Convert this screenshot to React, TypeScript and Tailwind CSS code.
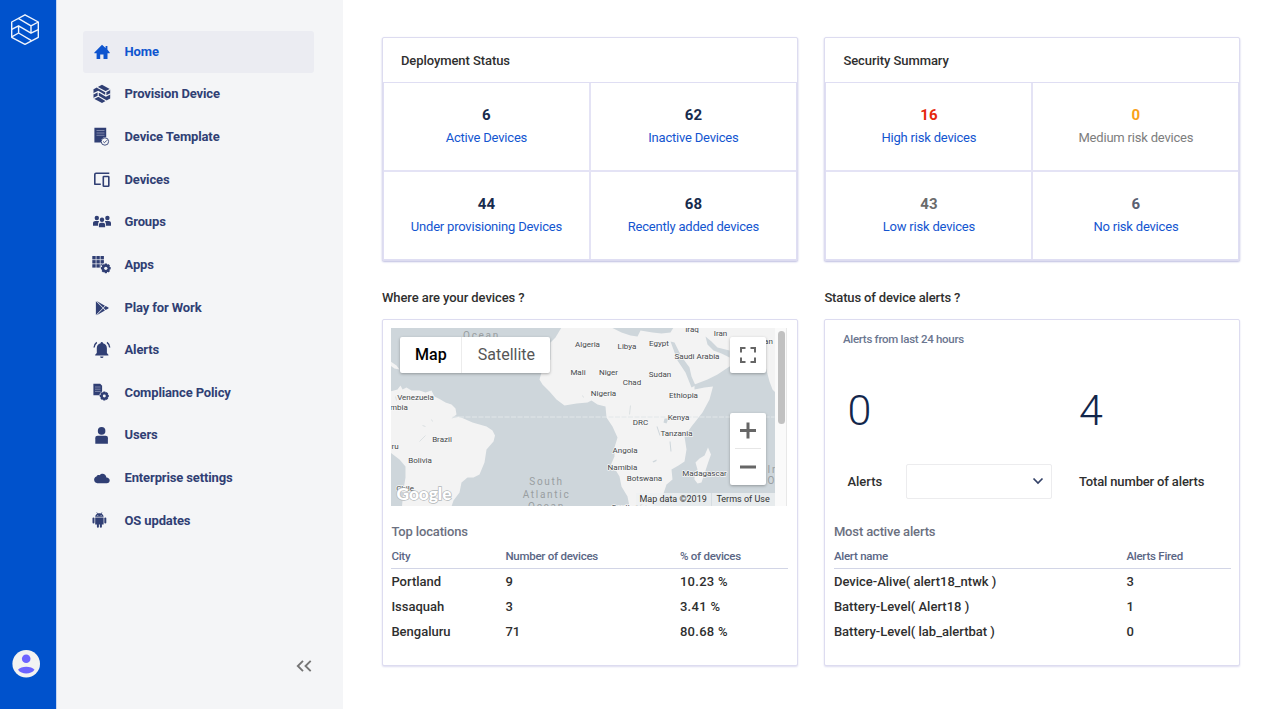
import type { ReactNode } from "react";

function Icon({ children }: { children: ReactNode }) {
  return (
    <svg width="20" height="20" viewBox="0 0 20 20" fill="currentColor" className="shrink-0">
      {children}
    </svg>
  );
}

function Gear({ x, y, r, hole }: { x: number; y: number; r: number; hole: string }) {
  return (
    <g transform={`translate(${x} ${y})`}>
      {[0, 45, 90, 135].map((a) => (
        <rect key={a} x={-1.2} y={-r} width={2.4} height={r * 2} rx={0.4} transform={`rotate(${a})`} />
      ))}
      <circle r={r * 0.82} />
      <circle r={r * 0.33} fill={hole} />
    </g>
  );
}

const bg = "#f4f5f7";

const items: { label: string; icon: ReactNode }[] = [
  {
    label: "Home",
    icon: <path d="M10 2.8 13.6 6V4h1.8v3.6l2.3 2.8c.3.4 0 .9-.4.9h-1.8V17h-4v-4.500H8.200V17H4.600v-5.700H2.800c-.5 0-.7-.5-.4-.9Z" />,
  },
  {
    label: "Provision Device",
    icon: (
      <>
        <path d="M10 .8 18.200 5.200v9.400L10 19l-8.500-4.400V5.200Z" />
        <path d="M5.200 3.300 13.600 7.700 18.400 5.200M1.300 9.900 6.200 7.400l7.700 4.600 4.700-2.300M1.300 14.600l4.900-2.500 8.300 4.900M6.200 7.400v4.700M13.800 7.600V12" fill="none" stroke={bg} strokeWidth="1.200" />
      </>
    ),
  },
  {
    label: "Device Template",
    icon: (
      <>
        <path d="M2.400.8h11.800v9.400a4.600 4.600 0 0 0-5.200 5.400H2.400Z" />
        <path d="M4.500 3.500h8M4.500 6h8M4.500 8.300h8" stroke="#9298b8" strokeWidth="0.8" />
        <circle cx="12.900" cy="14.500" r="3.700" fill={bg} stroke="currentColor" strokeWidth="0.9" />
        <path d="m11.200 14.500 1.300 1.200 2.400-2.400" fill="none" stroke="currentColor" strokeWidth="0.9" />
      </>
    ),
  },
  {
    label: "Devices",
    icon: (
      <g fill="none" stroke="currentColor" strokeWidth="1.600" strokeLinejoin="round">
        <path d="M17.300 3.200H4a1.200 1.200 0 0 0-1.200 1.200v9.900h6" />
        <rect x="11.300" y="6.500" width="5.500" height="9.800" rx="0.6" />
      </g>
    ),
  },
  {
    label: "Groups",
    icon: (
      <>
        <circle cx="4.800" cy="6" r="2.200" />
        <circle cx="15.400" cy="6" r="2.200" />
        <path d="M1 13.800v-2.500c0-1.500 1-2.300 2.300-2.300h2.600c.5 0 .8 0 1.200.3-.8 1-1 2-1 3v1.500ZM19 13.800v-2.500c0-1.500-1-2.300-2.300-2.300h-2.600c-.5 0-.8 0-1.200.3.8 1 1 2 1 3v1.500Z" />
        <circle cx="10" cy="7.800" r="2.200" />
        <path d="M6.900 15.200V13c0-1.400.9-2.300 2.200-2.300h1.800c1.300 0 2.200.9 2.200 2.300v2.200Z" />
      </>
    ),
  },
  {
    label: "Apps",
    icon: (
      <>
        {[0, 1, 2].map((r) =>
          [0, 1, 2].map((c) => <rect key={`${r}${c}`} x={0.3 + c * 4.1} y={1 + r * 4.1} width="3.400" height="3.400" />),
        )}
        <circle cx="13.800" cy="13.300" r="5.400" fill={bg} />
        <Gear x={13.8} y={13.3} r={4.9} hole={bg} />
      </>
    ),
  },
  {
    label: "Play for Work",
    icon: (
      <>
        <path d="M3.900 3.300v13.600l6.800-6.800Z" />
        <path d="M4.700 2.900 12.900 7.700l-1.800 1.900ZM4.700 17.300l8.200-4.800-1.800-1.900ZM13.600 8.100l2.800 1.500c.3.3.3.7 0 1l-2.800 1.500-2-2Z" />
      </>
    ),
  },
  {
    label: "Alerts",
    icon: (
      <g transform="translate(0 .5)">
        <path d="M8.600 2.800a1.200 1.200 0 0 1 2.400 0c2.600.6 3.900 2.600 3.900 5v4.700l1.500 1.700v.9H3.200v-.9l1.600-1.700V7.800c0-2.400 1.300-4.400 3.800-5ZM8.100 15.900h3.400a1.700 1.700 0 0 1-3.400 0Z" />
        <path d="M4.800 1.900C3 3.200 2.200 5 2.100 7M15 1.900c1.800 1.300 2.600 3.100 2.700 5.100" fill="none" stroke="currentColor" strokeWidth="1.400" />
      </g>
    ),
  },
  {
    label: "Compliance Policy",
    icon: (
      <>
        <path d="M1.400.8h6.800l1.900 1.900v9.500H1.400Z" />
        <path d="M3 4h5.500M3 6.200h5.500M3 8.400h5.500" stroke="#9298b8" strokeWidth="0.8" />
        <circle cx="12.300" cy="13" r="5" fill={bg} />
        <Gear x={12.3} y={13} r={4.5} hole={bg} />
      </>
    ),
  },
  {
    label: "Users",
    icon: (
      <>
        <circle cx="9.600" cy="4.900" r="3.800" />
        <path d="M3.300 17.800v-5.600c0-1.600.8-2.400 2.300-2.400h8c1.500 0 2.300.8 2.300 2.400v5.600Z" />
      </>
    ),
  },
  {
    label: "Enterprise settings",
    icon: <path d="M5.300 15.200a3.500 3.500 0 0 1-.8-6.800c.6-1.200 2-1.700 3.200-1.200 2-2.800 6.400-1.500 6.700 2.200 2 .1 3.300 1.300 3.300 3 0 1.600-1.200 2.800-2.900 2.800Z" />,
  },
  {
    label: "OS updates",
    icon: (
      <>
        <path d="M3.200 5.800c.1-1.500.9-2.500 2-3.100l-.8-1.200.5-.3.9 1.300c1-.3 2.200-.3 3.200 0l.9-1.300.5.3-.8 1.200c1.100.6 1.900 1.600 2 3.100ZM3.200 6.500h8.400v6.900H9.900v2.400a1 1 0 0 1-2 0v-2.400h-1v2.400a1 1 0 0 1-2 0v-2.400H3.200Z" />
        <rect x="0.500" y="6.400" width="2" height="6" rx="1" />
        <rect x="12.300" y="6.400" width="2" height="6" rx="1" />
        <path d="M5.400 4.200h.8v.8h-.8ZM8.700 4.200h.8v.8h-.8Z" fill={bg} />
      </>
    ),
  },
];

const countries: [string, number, number][] = [
  ["Venezuela", 416, 401],
  ["mbia", 399.5, 411],
  ["Brazil", 442.5, 442.5],
  ["ru", 395.5, 449.5],
  ["Bolivia", 420.5, 464],
  ["Chile", 405.5, 491.5],
  ["Algeria", 588, 347.5],
  ["Libya", 627.5, 350],
  ["Egypt", 659.5, 347],
  ["Iraq", 692.5, 332.5],
  ["Iran", 721, 337],
  ["an", 769, 344.5],
  ["Saudi Arabia", 697.5, 360],
  ["Mali", 578.5, 375.5],
  ["Niger", 609, 376],
  ["Chad", 632.5, 385.5],
  ["Sudan", 660.5, 377.5],
  ["Nigeria", 604, 397],
  ["Ethiopia", 684, 399],
  ["DRC", 641, 425.5],
  ["Kenya", 679, 420.5],
  ["Tanzania", 677, 437],
  ["Angola", 625.5, 453.5],
  ["Namibia", 623, 471],
  ["Botswana", 645, 481.5],
  ["Madagascar", 705, 476.5],
  ["South Africa", 634, 510.5],
];

function WorldMap() {
  return (
    <svg width="384" height="178" viewBox="391.5 328.5 384 178" className="block shrink-0 bg-[#ced6db]">
      <g fill="#f3f3f3">
        <path d="M391 392 398 390 401 386 403 390 407 388 412 391 420 391 426 393 432 391 435 397 441 400 446 403 452 405 456 409 457 415 452 419 459 417 464 419 473 423 480 425 487 427 493 431 495.500 436 494 442 487 450 485 463 480 475 474 478 468 478 462 483 460 493 454 501 452 507H402.500L404 490 406 478 406 467 400 460 391 453Z" />
        <path d="M562 328 556 338 551 343V360L547 365 542 373 540 380 543 385 550 392 557 400 565 406 577 404 588 403 592 401 598 405 606 407 607 418 613 427 618 438 615 448 615 457 611.500 465 617 472 620 477 622 487 628 497 630 507H652L663 497 667 485 673 480 672 470 679 466 685 462 687 450 685 437 692 427 703 413 710 400 713.500 387 705 388 695 390 695 385 708 380 718 375 730 367H766L770 382 773 390 776 393V328Z" />
        <path d="M708.500 448 711.500 455 709 462 704 477 702 483 698 484 695 480 695 476 698 470 696 463 700 459 705 456Z" />
        <path d="M391 362 397 366 400 370 395 369 391 366Z" />
      </g>
      <g fill="#ced6db">
        <path d="M612 328 622 333 631 336 638 337 641 331 653 333 662 334 671 333 674 328Z" />
        <path d="M671 342 675 343 682 357 690 368 692 377 696 386 692 388 686 373 678 361Z" />
        <path d="M706 337 712 342 718 348 730 351V358L722 354 714 351 708 345Z" />
        <path d="M665 419l4 0-2 5-3-1ZM657 427l1 0 3 9-1 0ZM670 442l1 0 1 10-1 0ZM653 462l4-2 0 1.500-3 1.500Z" />
      </g>
      <path d="m420 442 6-6M423 426l3 1M432 420l1 2M630 415l1-9M583 396l1 2M397 401l-1-4" fill="none" stroke="#d4dadd" strokeWidth="0.8" />
      <path d="M453 417.500H775" stroke="#e2e7e9" strokeWidth="1" strokeDasharray="5 1.500" fill="none" />
      <g fontFamily="Roboto, sans-serif" fontSize="10" letterSpacing="1.7" fill="#999ea1" textAnchor="middle">
        <text x="482" y="339.500">Ocean</text>
        <text x="547" y="485.800">South</text>
        <text x="547" y="498">Atlantic</text>
        <text x="547" y="510">Ocean</text>
        <text x="768" y="473" textAnchor="start">In</text>
        <text x="768" y="484" textAnchor="start">O</text>
      </g>
      <g
        fontFamily="Roboto, sans-serif"
        fontSize="8"
        fill="#45484b"
        stroke="#f7f7f7"
        strokeWidth="1.500"
        strokeLinejoin="round"
        paintOrder="stroke"
        textAnchor="middle"
      >
        {countries.map(([name, x, y]) => (
          <text key={name} x={x} y={y - 0.3}>
            {name}
          </text>
        ))}
      </g>
      <text
        x="397"
        y="500"
        fontFamily="Lato, sans-serif"
        fontSize="17"
        fontWeight="900"
        textLength="55"
        lengthAdjust="spacingAndGlyphs"
        fill="#fff"
        stroke="#b4b8ba"
        strokeWidth="1.400"
        paintOrder="stroke"
      >
        Google
      </text>
    </svg>
  );
}

function MapPanel() {
  return (
    <div className="relative flex h-[178px] w-[396px] overflow-hidden font-[Roboto,sans-serif]">
      <WorldMap />
      <div className="flex-1 border-r border-[#e8e8e8] bg-[#fafafa] pl-[3px] pt-[3px]">
        <div className="h-[93px] w-[7px] rounded-full bg-[#c1c1c1]" />
      </div>
      <div className="absolute left-[9px] top-[9px] flex h-[36px] w-[150px] items-center rounded-[2px] bg-white text-[16px] shadow-[0_1px_3px_rgba(0,0,0,0.3)]">
        <span className="w-[62px] border-r border-[#ececec] text-center font-medium leading-[36px] text-black">Map</span>
        <span className="flex-1 text-center leading-[36px] text-[#565656]">Satellite</span>
      </div>
      <div className="absolute left-[338.500px] top-[9px] flex h-[36px] w-[36px] items-center justify-center rounded-[2px] bg-white shadow-[0_1px_3px_rgba(0,0,0,0.3)]">
        <svg width="16" height="16" viewBox="0 0 16 16" fill="none" stroke="#666" strokeWidth="2">
          <path d="M1 5.500V1h4.500M10.500 1H15v4.500M15 10.500V15h-4.500M5.500 15H1v-4.500" />
        </svg>
      </div>
      <div className="absolute left-[338.500px] top-[85px] flex h-[72px] w-[36px] flex-col items-center rounded-[2px] bg-white shadow-[0_1px_3px_rgba(0,0,0,0.3)]">
        <svg width="36" height="72" viewBox="0 0 36 72" fill="none" stroke="#666" strokeWidth="3">
          <path d="M18 9.500V25.500M10 17.500H26M10 54H26" />
          <path d="M5 35.500H31" stroke="#e6e6e6" strokeWidth="1" />
        </svg>
      </div>
      <div className="absolute bottom-0 left-[245px] flex h-[12.500px] w-[139px] bg-[#eef0f1]/80 text-[9px] leading-[13px] text-[#333]">
        <span className="w-[76px] border-r border-[#d6dde1] pl-[3px]">Map data ©2019</span>
        <span className="pl-[4px]">Terms of Use</span>
      </div>
    </div>
  );
}

type Stat = { value: string; label: string; valueClass: string; labelClass: string };

const deployment: Stat[] = [
  { value: "6", label: "Active Devices", valueClass: "text-[#172b4d]", labelClass: "text-[#1355d0]" },
  { value: "62", label: "Inactive Devices", valueClass: "text-[#172b4d]", labelClass: "text-[#1355d0]" },
  { value: "44", label: "Under provisioning Devices", valueClass: "text-[#172b4d]", labelClass: "text-[#1355d0]" },
  { value: "68", label: "Recently added devices", valueClass: "text-[#172b4d]", labelClass: "text-[#1355d0]" },
];

const security: Stat[] = [
  { value: "16", label: "High risk devices", valueClass: "text-[#e5280c]", labelClass: "text-[#1355d0]" },
  { value: "0", label: "Medium risk devices", valueClass: "text-[#f9a11b]", labelClass: "text-[#7d7d7d]" },
  { value: "43", label: "Low risk devices", valueClass: "text-[#6b6b6b]", labelClass: "text-[#1355d0]" },
  { value: "6", label: "No risk devices", valueClass: "text-[#5a6072]", labelClass: "text-[#1355d0]" },
];

function StatCard({ title, stats }: { title: string; stats: Stat[] }) {
  return (
    <section className="h-[224px] w-[416px] rounded-[2px] border border-[#dddcf0] bg-white shadow-[0_1px_2px_#bdbde0]">
      <h2 className="h-[44px] pl-[18px] text-[13px] font-medium leading-[45px] tracking-[-0.070px] text-[#2f2f2f]">{title}</h2>
      <div className="grid h-[178px] grid-cols-2 grid-rows-2 gap-[2px] border border-[#dfdef3] bg-[#e4e3f5]">
        {stats.map((s) => (
          <div key={s.label} className="flex flex-col items-center bg-white pt-[20px]">
            <span className={`text-[15px] font-bold leading-[24px] ${s.valueClass}`}>{s.value}</span>
            <span className={`text-[13px] leading-[22px] tracking-[-0.200px] ${s.labelClass}`}>{s.label}</span>
          </div>
        ))}
      </div>
    </section>
  );
}

function DataTable({ title, cols, head, rows }: { title: string; cols: string; head: string[]; rows: string[][] }) {
  return (
    <div>
      <h3 className="text-[13px] font-medium leading-[20px] tracking-[-0.150px] text-[#6b7080]">{title}</h3>
      <div className={`mt-[4px] grid h-[23px] border-b border-[#d2d5e6] text-[11.500px] font-medium leading-[21px] tracking-[-0.250px] text-[#5a6685] ${cols}`}>
        {head.map((h) => (
          <span key={h}>{h}</span>
        ))}
      </div>
      {rows.map((r) => (
        <div key={r[0]} className={`grid h-[25px] text-[13px] font-medium leading-[26px] text-[#2f2f2f] ${cols}`}>
          {r.map((c) => (
            <span key={c} className={c.endsWith("%") ? "tracking-[0.300px]" : ""}>
              {c}
            </span>
          ))}
        </div>
      ))}
    </div>
  );
}

export default function App() {
  return (
    <div className="flex h-[709px] w-[1280px] overflow-hidden bg-white font-[Roboto,sans-serif]">
      <aside className="flex w-[57px] shrink-0 flex-col justify-between border-r border-[#c5d6f2] bg-[#0052cc] pb-[31px] pl-[11px] pt-[14px]">
        <svg width="28" height="31" viewBox="0 0 28 31" fill="none" stroke="#f0f5fd" strokeWidth="1.400" strokeLinejoin="round">
          <path d="M14 .8 27.300 8v15.300L14 30.300.7 23.300V8Z" />
          <path d="M7.300 4.400 20 11.800 27.300 8M.7 15.300 7.600 11.800 20 19.200 27.300 15.700M.7 22.800 7.600 19 20.500 26.600M7.600 11.800V19M20 11.800V19.200" />
        </svg>
        <svg width="28" height="28" viewBox="0 0 28 28" className="ml-[1px]">
          <circle cx="14.200" cy="13.800" r="13.800" fill="#f2f2f2" />
          <circle cx="14.200" cy="8.700" r="4.300" fill="#6c63ff" />
          <path d="M6 19.800c3-4.200 13.500-4.200 16.500 0-3.500 5-13 5-16.500 0Z" fill="#6c63ff" />
        </svg>
      </aside>

      <nav className="flex w-[286px] shrink-0 flex-col bg-[#f4f5f7] pl-[26px] pt-[30.500px]">
        {items.map(({ label, icon }, i) => (
          <div
            key={label}
            className={`flex h-[42.670px] w-[230.500px] shrink-0 items-center rounded-[3px] pl-[9px] text-[13px] font-bold tracking-[-0.130px] ${
              i === 0 ? "bg-[#ebecf2] text-[#0f55cf]" : "text-[#303f74]"
            }`}
          >
            <Icon>{icon}</Icon>
            <span className="ml-[12.500px] pb-[1px]">{label}</span>
          </div>
        ))}
        <svg width="16" height="12" viewBox="0 0 16 12" fill="none" stroke="#757575" strokeWidth="1.900" className="ml-[213px] mt-[118px] shrink-0">
          <path d="M7 .8 1.800 6 7 11.200M14.700.8 9.500 6l5.200 5.200" />
        </svg>
      </nav>

      <main className="grid grid-cols-[416px_416px] content-start gap-x-[26.500px] pl-[38.900px] pt-[37px]">
        <StatCard title="Deployment Status" stats={deployment} />
        <StatCard title="Security Summary" stats={security} />

        <h2 className="mt-[25.500px] h-[32px] text-[13px] font-medium leading-[21px] tracking-[-0.080px] text-[#2f2f2f]">Where are your devices ?</h2>
        <h2 className="mt-[25.500px] h-[32px] text-[13px] font-medium leading-[21px] tracking-[-0.150px] text-[#2f2f2f]">Status of device alerts ?</h2>

        <section className="h-[347.500px] rounded-[2px] border border-[#dddcf0] bg-white px-[8.500px] pt-[8px] shadow-[0_1px_2px_#dddcf0]">
          <MapPanel />
          <div className="mt-[16px]">
            <DataTable
              title="Top locations"
              cols="grid-cols-[114px_174.500px_1fr]"
              head={["City", "Number of devices", "% of devices"]}
              rows={[
                ["Portland", "9", "10.23 %"],
                ["Issaquah", "3", "3.41 %"],
                ["Bengaluru", "71", "80.68 %"],
              ]}
            />
          </div>
        </section>

        <section className="h-[347.500px] rounded-[2px] border border-[#dddcf0] bg-white px-[8.500px] shadow-[0_1px_2px_#dddcf0]">
          <p className="ml-[9px] pt-[9.500px] text-[11.500px] font-medium leading-[20px] tracking-[-0.280px] text-[#6b7690]">Alerts from last 24 hours</p>
          <div className="mt-[31.500px] grid h-[58px] grid-cols-[245px_1fr] text-[43px] font-light leading-[58px] text-[#12264b]">
            <span className="pl-[13.500px]">0</span>
            <span>4</span>
          </div>
          <div className="mt-[25px] flex h-[35px] items-center text-[13px] font-medium text-[#2f2f2f]">
            <span className="w-[72px] pl-[13.500px] pt-[1px]">Alerts</span>
            <div className="flex h-[35px] w-[146px] items-center justify-end rounded-[2px] border border-[#ececee] pr-[7px]">
              <svg width="12" height="8" viewBox="0 0 12 8" fill="none" stroke="#344268" strokeWidth="1.700">
                <path d="M1.500 1.500 6 6l4.500-4.500" />
              </svg>
            </div>
            <span className="pl-[27px] pt-[1px] tracking-[-0.150px]">Total number of alerts</span>
          </div>
          <div className="mt-[23px]">
            <DataTable
              title="Most active alerts"
              cols="grid-cols-[292.500px_1fr]"
              head={["Alert name", "Alerts Fired"]}
              rows={[
                ["Device-Alive( alert18_ntwk )", "3"],
                ["Battery-Level( Alert18 )", "1"],
                ["Battery-Level( lab_alertbat )", "0"],
              ]}
            />
          </div>
        </section>
      </main>
    </div>
  );
}
